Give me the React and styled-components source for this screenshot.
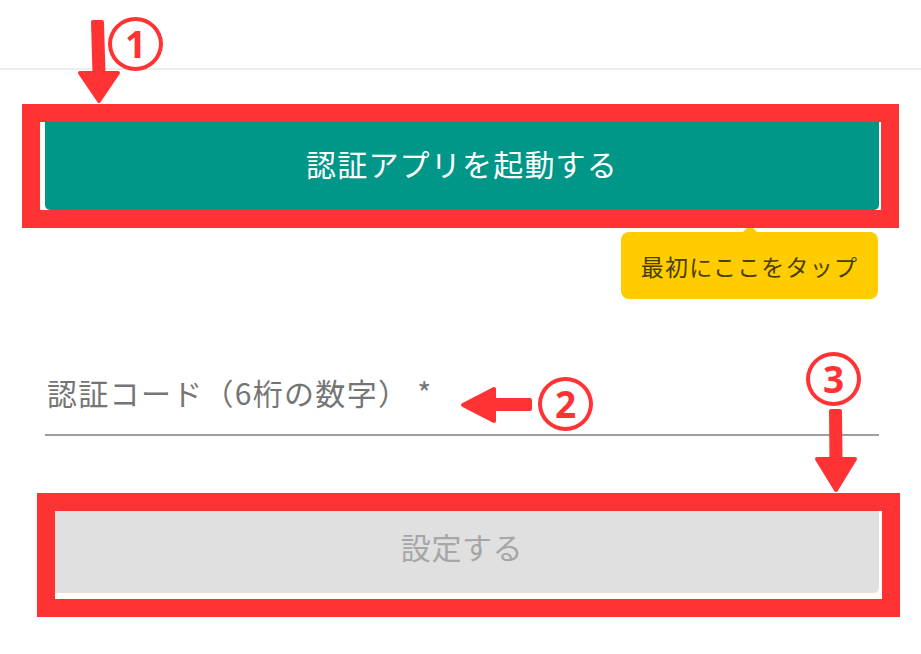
import React from "react";
import styled, { createGlobalStyle } from "styled-components";

const RED = "#ff3333";

const Global = createGlobalStyle`
  html, body { margin: 0; padding: 0; background: #fff; }
  body { font-family: "Noto Sans CJK JP", "Noto Sans", sans-serif; }
`;

const Page = styled.div`
  position: relative;
  width: 921px;
  height: 654px;
  overflow: hidden;
  background: #fff;
`;

const Header = styled.div`
  height: 68px;
  border-bottom: 2px solid #eeeeee;
`;

const Content = styled.div`
  display: flex;
  flex-direction: column;
  padding: 0 42px 0 45px;
`;

const Button = styled.div`
  height: 94px;
  margin-top: ${(p) => p.$mt}px;
  border-radius: 5px;
  display: flex;
  align-items: center;
  justify-content: center;
  font-size: 30px;
  letter-spacing: ${(p) => (p.$disabled ? 0.6 : 1.2)}px;
  background: ${(p) => (p.$disabled ? "#e0e0e0" : "#009688")};
  color: ${(p) => (p.$disabled ? "#a6a6a6" : "#ffffff")};
`;

const Tooltip = styled.div`
  position: relative;
  align-self: flex-end;
  margin-top: 22px;
  margin-right: 1px;
  width: 257px;
  height: 67px;
  border-radius: 8px;
  background: #ffcc00;
  color: #4a3d00;
  font-size: 23px;
  letter-spacing: 1.2px;
  display: flex;
  align-items: center;
  justify-content: center;
  &::before {
    content: "";
    position: absolute;
    top: -7px;
    left: 50%;
    margin-left: -8px;
    border-left: 8px solid transparent;
    border-right: 8px solid transparent;
    border-bottom: 8px solid #ffcc00;
  }
`;

const Field = styled.div`
  margin-top: 52px;
  height: 83px;
  display: flex;
  align-items: flex-end;
  border-bottom: 2px solid #9e9e9e;
`;

const Label = styled.div`
  font-size: 30px;
  letter-spacing: 1.3px;
  color: #757575;
  padding: 0 0 27px 2px;
  line-height: 1;
`;

const Frame = styled.div`
  position: absolute;
  box-sizing: border-box;
  border: 18px solid ${RED};
  left: ${(p) => p.$x}px;
  top: ${(p) => p.$y}px;
  width: ${(p) => p.$w}px;
  height: ${(p) => p.$h}px;
`;

const Circled = styled.div`
  position: absolute;
  box-sizing: border-box;
  left: ${(p) => p.$x}px;
  top: ${(p) => p.$y}px;
  width: 55px;
  height: 54px;
  border: 4.5px solid ${RED};
  border-radius: 50%;
  color: ${RED};
  display: flex;
  align-items: center;
  justify-content: center;
  font-family: "Noto Sans", "DejaVu Sans", sans-serif;
  font-weight: 700;
  font-size: 37px;
  line-height: 1;
  padding-bottom: 2px;
`;

const ArrowSvg = styled.svg`
  position: absolute;
  left: 0;
  top: 0;
  width: 921px;
  height: 654px;
  pointer-events: none;
`;

function Arrows() {
  const s = { fill: RED, stroke: RED, strokeLinejoin: "round", strokeWidth: 4 };
  return (
    <ArrowSvg viewBox="0 0 921 654">
      <path d="M93 22 L102 22 L103.5 74 L94.5 74 Z" {...s} />
      <path d="M80 73 L118 73 L99 101 Z" {...s} />
      <path d="M494 400 L530 400 L530 409 L494 409 Z" {...s} />
      <path d="M494 389 L494 421 L463 405 Z" {...s} />
      <path d="M831 411 L840 411 L840.5 461 L831.5 461 Z" {...s} />
      <path d="M817 459 L855 459 L836 490 Z" {...s} />
    </ArrowSvg>
  );
}

export default function App() {
  return (
    <Page>
      <Global />
      <Header />
      <Content>
        <Button $mt={46}>認証アプリを起動する</Button>
        <Tooltip>最初にここをタップ</Tooltip>
        <Field>
          <Label>認証コード（6桁の数字） *</Label>
        </Field>
        <Button $mt={63} $disabled>設定する</Button>
      </Content>
      <Frame $x={22} $y={104} $w={877} $h={124} />
      <Frame $x={37} $y={493} $w={863} $h={124} />
      <Arrows />
      <Circled $x={108} $y={17}>1</Circled>
      <Circled $x={538} $y={377}>2</Circled>
      <Circled $x={806} $y={352}>3</Circled>
    </Page>
  );
}
